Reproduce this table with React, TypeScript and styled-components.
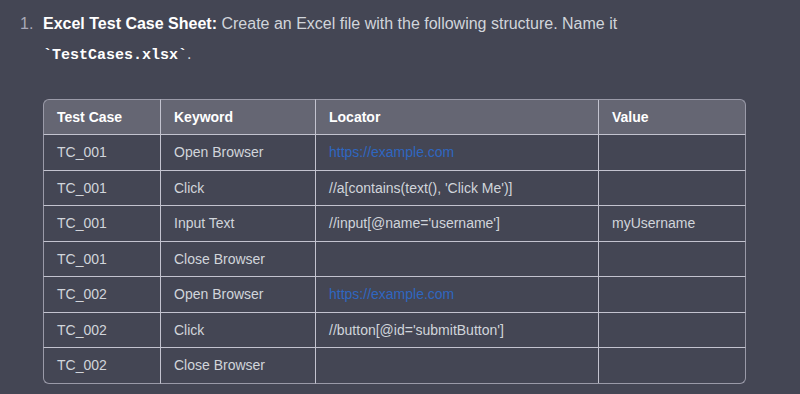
import React from "react";
import styled, { createGlobalStyle } from "styled-components";

const GlobalStyle = createGlobalStyle`
  html, body {
    margin: 0;
    padding: 0;
    background: #444654;
  }
  body {
    font-family: "Liberation Sans", Arial, sans-serif;
    color: #d1d5db;
  }
`;

const Page = styled.div`
  width: 800px;
  height: 394px;
  box-sizing: border-box;
  padding: 9px 0 0 20px;
  background: #444654;
  overflow: hidden;
`;

const List = styled.ol`
  margin: 0;
  padding: 0;
  list-style: none;
`;

const Item = styled.li`
  display: grid;
  grid-template-columns: 23px 703px;
  font-size: 16px;
  line-height: 30px;
`;

const Marker = styled.span`
  color: #a9a9b8;
`;

const Content = styled.div`
  display: flex;
  flex-direction: column;
  gap: 30px;
`;

const Paragraph = styled.p`
  margin: 0;
  width: 640px;
  line-height: 30px;
`;

const Strong = styled.strong`
  color: #ffffff;
  font-weight: 700;
`;

const Code = styled.code`
  font-family: "Liberation Mono", "DejaVu Sans Mono", monospace;
  font-size: 15px;
  line-height: 1;
  font-weight: 700;
  color: #ffffff;
  &::before,
  &::after {
    content: "\`";
  }
`;

const Table = styled.table`
  width: 703px;
  table-layout: fixed;
  border-collapse: separate;
  border-spacing: 0;
  font-size: 14px;
`;

const OUTER = "#9a9aa8";
const INNER = "#c3c3cf";

const Th = styled.th<{ $w?: number }>`
  box-sizing: border-box;
  ${(p) => (p.$w ? `width: ${p.$w}px;` : "")}
  text-align: left;
  font-weight: 700;
  color: #ffffff;
  background: #656673;
  padding: 6px 13px;
  line-height: 22px;
  border-top: 1px solid ${OUTER};
  border-left: 1px solid ${INNER};
  border-bottom: 1px solid ${INNER};
  &:first-child {
    border-left-color: ${OUTER};
    border-top-left-radius: 6px;
  }
  &:last-child {
    border-right: 1px solid ${OUTER};
    border-top-right-radius: 6px;
  }
`;

const Td = styled.td`
  box-sizing: border-box;
  padding: 6px 13px;
  line-height: 22.57px;
  white-space: nowrap;
  color: #d1d5db;
  border-left: 1px solid ${INNER};
  border-bottom: 1px solid ${INNER};
  &:first-child {
    border-left-color: ${OUTER};
  }
  &:last-child {
    border-right: 1px solid ${OUTER};
  }
  tr:last-child > & {
    border-bottom-color: ${OUTER};
  }
  tr:last-child > &:first-child {
    border-bottom-left-radius: 6px;
  }
  tr:last-child > &:last-child {
    border-bottom-right-radius: 6px;
  }
`;

const Link = styled.a`
  color: #2f66c0;
  text-decoration: none;
`;

type Row = { tc: string; keyword: string; locator: string; value: string; link?: boolean };

const rows: Row[] = [
  { tc: "TC_001", keyword: "Open Browser", locator: "https://example.com", value: "", link: true },
  { tc: "TC_001", keyword: "Click", locator: "//a[contains(text(), 'Click Me')]", value: "" },
  { tc: "TC_001", keyword: "Input Text", locator: "//input[@name='username']", value: "myUsername" },
  { tc: "TC_001", keyword: "Close Browser", locator: "", value: "" },
  { tc: "TC_002", keyword: "Open Browser", locator: "https://example.com", value: "", link: true },
  { tc: "TC_002", keyword: "Click", locator: "//button[@id='submitButton']", value: "" },
  { tc: "TC_002", keyword: "Close Browser", locator: "", value: "" },
];

export default function App() {
  return (
    <>
      <GlobalStyle />
      <Page>
        <List>
          <Item>
            <Marker>1.</Marker>
            <Content>
              <Paragraph>
                <Strong>Excel Test Case Sheet:</Strong> Create an Excel file with the following structure. Name it{" "}
                <Code>TestCases.xlsx</Code>.
              </Paragraph>
              <Table>
                <thead>
                  <tr>
                    <Th $w={117}>Test Case</Th>
                    <Th $w={155}>Keyword</Th>
                    <Th $w={283}>Locator</Th>
                    <Th>Value</Th>
                  </tr>
                </thead>
                <tbody>
                  {rows.map((r, i) => (
                    <tr key={i}>
                      <Td>{r.tc}</Td>
                      <Td>{r.keyword}</Td>
                      <Td>{r.link ? <Link href="#">{r.locator}</Link> : r.locator}</Td>
                      <Td>{r.value}</Td>
                    </tr>
                  ))}
                </tbody>
              </Table>
            </Content>
          </Item>
        </List>
      </Page>
    </>
  );
}
